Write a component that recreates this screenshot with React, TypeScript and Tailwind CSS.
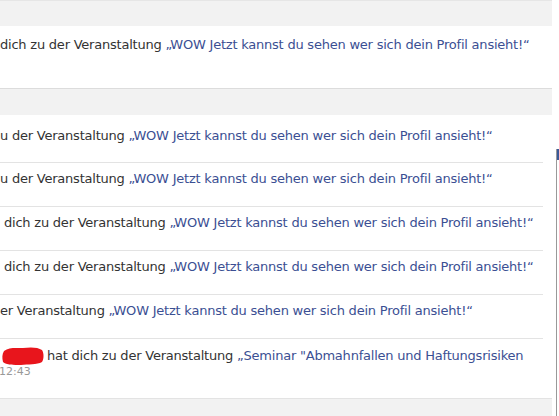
const link = 'text-[#3b4f93]';

function Row({ pre, post, indent = 0, first = false }: { pre: string; post: string; indent?: number; first?: boolean }) {
  return (
    <div className={`border-b border-[#e3e3e3] ${first ? 'h-[48px] pt-[13px]' : 'h-[44px] pt-[8px]'}`}>
      <p className="whitespace-nowrap leading-[16px]" style={{ paddingLeft: indent }}>
        {pre}
        <span className={link}>{post}</span>
      </p>
    </div>
  );
}

const wow = '„WOW Jetzt kannst du sehen wer sich dein Profil ansieht!“';

export default function App() {
  return (
    <div className="flex w-[559px] h-[416px] overflow-hidden bg-white text-[13px] tracking-[-0.22px] text-[#333] font-['DejaVu_Sans',sans-serif]">
      <div className="w-[552px] shrink-0 flex flex-col">
        <div className="h-[26px] bg-[#f2f2f2] border-t border-[#e6e6e6]" />
        <div className="h-[63px] bg-white border-b border-[#dcdcdc] pt-[11px]">
          <p className="whitespace-nowrap leading-[16px]">
            dich zu der Veranstaltung <span className={link}>{wow}</span>
          </p>
        </div>
        <div className="h-[26px] bg-[#f2f2f2]" />
        <div className="flex-1 bg-white pr-[9px] flex flex-col">
          <Row first pre="u der Veranstaltung " post={wow} />
          <Row pre="u der Veranstaltung " post={wow} />
          <Row indent={4} pre="dich zu der Veranstaltung " post={wow} />
          <Row indent={4} pre="dich zu der Veranstaltung " post={wow} />
          <Row pre="er Veranstaltung " post={wow} />
          <div className="h-[58px] pt-[8px]">
            <div className="flex items-center gap-[3px] whitespace-nowrap leading-[16px]">
              <svg width="42" height="18" viewBox="0 0 42 18" className="shrink-0 ml-[2px]">
                <path
                  d="M2 4 C7 0 14 1 21 1 C28 0 36 0 40 3 C42 6 42 12 40 15 C35 18 26 17 19 18 C12 18 4 18 1 15 C0 11 0 7 2 4 Z"
                  fill="#e8151c"
                />
              </svg>
              <span>
                hat dich zu der Veranstaltung{' '}
                <span className={link}>„Seminar "Abmahnfallen und Haftungsrisiken</span>
              </span>
            </div>
            <p className="text-[11px] tracking-normal text-[#999] leading-[14px] -ml-[1px]">12:43</p>
          </div>
        </div>
        <div className="h-[18px] bg-[#f2f2f2] border-t border-[#e3e3e3]" />
      </div>
      <div className="flex-1 pt-[149px]">
        <div className="ml-[4px] h-full border-l border-[#999] w-[3px]">
          <div className="h-[11px] bg-[#3b5998] w-[2px]" />
        </div>
      </div>
    </div>
  );
}
